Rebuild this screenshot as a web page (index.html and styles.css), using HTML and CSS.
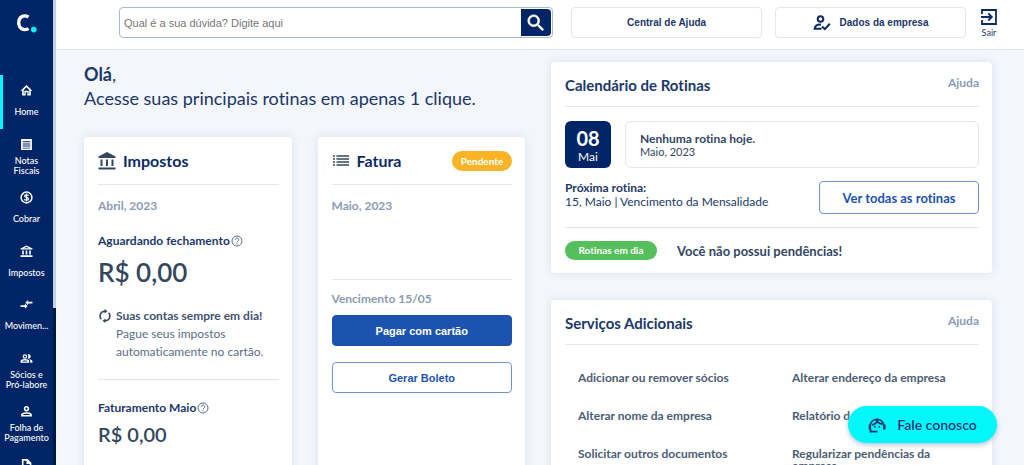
FILE: index.html
```
<!DOCTYPE html>
<html lang="pt-BR">
<head>
<meta charset="utf-8">
<meta name="viewport" content="width=device-width, initial-scale=1">
<title>Home</title>
<link rel="stylesheet" href="styles.css">
</head>
<body>
<div class="app">
  <aside class="sidebar">
    <a class="logo" href="#" aria-label="Início">
      <svg width="22" height="20" viewBox="0 0 22 20"><path d="M12.500 4C7.500 1.200 2.700 4.200 2.700 9.800S7.500 18.200 12.500 15.600" fill="none" stroke="#fff" stroke-width="3.300"/><circle cx="17.800" cy="16.600" r="2.800" fill="#00f5ff"/></svg>
    </a>
    <nav class="menu">
      <a class="item active" href="#"><svg class="ico" viewBox="0 0 24 24"><path fill-rule="evenodd" d="M12 2L1 12.500h3V21h6.500v-6h3v6H20v-8.500h3L12 2zm0 4.200l5 4.800v7.500H16v-6H8v6H7V11L12 6.200z"/></svg><span class="label">Home</span></a>
      <a class="item" href="#"><svg class="ico" viewBox="0 0 24 24"><path d="M2 2h20v20H2zM5 6v1.800h14V6zM5 10v1.800h14V10zM5 14v1.800h14V14zM5 18v1.500h14V18z" fill-rule="evenodd"/></svg><span class="label">Notas Fiscais</span></a>
      <a class="item" href="#"><svg class="ico" viewBox="0 0 24 24"><circle cx="12" cy="12" r="10" fill="none" stroke="#fff" stroke-width="2.800"/><path d="M16 8.500C15 6.500 8.500 6.300 8.500 9.300c0 3.400 7.200 1.800 7.200 5.300 0 3.200-6.700 3-7.700.5M12 4.500v15" fill="none" stroke="#fff" stroke-width="2.200"/></svg><span class="label">Cobrar</span></a>
      <a class="item" href="#"><svg class="ico" viewBox="0 0 24 24"><path d="M7 10H4v7.500h3V10zm6.500 0h-3v7.500h3V10zM23 19H1v3h22v-3zM20 10h-3v7.500h3V10zm-8-6.500L17 6H7l5-2.500M12 1L1 6.300V8.500h22V6.300L12 1z"/></svg><span class="label">Impostos</span></a>
      <a class="item" href="#"><svg class="ico" viewBox="0 0 24 24"><path d="M9 13.500H1v3h8V20l5-4.900-5-4.900zM15 13.300V10h8V7h-8V3.500l-5 4.900z"/></svg><span class="label">Movimen...</span></a>
      <a class="item" href="#"><svg class="ico" viewBox="0 0 24 24"><path fill-rule="evenodd" d="M9 4a4.200 4.200 0 1 1 0 8.400A4.200 4.200 0 0 1 9 4zm0 2.300a1.900 1.900 0 1 0 0 3.800 1.900 1.900 0 0 0 0-3.800zM1 20v-3c0-2.500 4-4 8-4s8 1.500 8 4v3zm2.500-2.300h11c-1-1.500-3-2.200-5.500-2.200s-4.500.7-5.500 2.200zM14 4.300a4.200 4.200 0 1 1 0 7.800c1.800-2.200 1.800-5.600 0-7.800zM17 13.300c3.500.4 6 1.700 6 3.700v3h-4v-3c0-1.500-.8-2.700-2-3.700z"/></svg><span class="label">Sócios e Pró-labore</span></a>
      <a class="item" href="#"><svg class="ico" viewBox="0 0 24 24"><path fill-rule="evenodd" d="M12 2a4.900 4.900 0 1 1 0 9.800A4.900 4.900 0 0 1 12 2zm0 2.800a2.100 2.100 0 1 0 0 4.200 2.100 2.100 0 0 0 0-4.200zM2 21v-3c0-2.800 5-4.500 10-4.500s10 1.700 10 4.500v3zm3.500-2.700h13c-1-1.300-4-2-6.500-2s-5.500.7-6.500 2z"/></svg><span class="label">Folha de Pagamento</span></a>
      <a class="item" href="#" aria-label="Documentos"><svg class="ico" viewBox="0 0 24 24"><path d="M3.500 0H14l7 7v16H3.500zM6.500 3v17h11.500V9H12V3z" fill-rule="evenodd"/></svg></a>
    </nav>
  </aside>
  <div class="rail"><div class="thumb"></div></div>
  <div class="page">
    <header class="topbar">
      <form class="search">
        <input class="search-input" type="text" aria-label="Buscar" placeholder="Qual é a sua dúvida? Digite aqui">
        <button class="search-btn" type="button" aria-label="Pesquisar"><svg width="22" height="22" viewBox="0 0 24 24"><path fill="#fff" stroke="#fff" stroke-width=".6" d="M15.500 14h-.79l-.28-.27A6.470 6.470 0 0 0 16 9.500 6.500 6.500 0 1 0 9.500 16c1.610 0 3.090-.59 4.230-1.570l.27.28v.79l5 4.990L20.490 19l-4.990-5zm-6 0C7.010 14 5 11.990 5 9.500S7.010 5 9.500 5 14 7.010 14 9.500 11.990 14 9.500 14z"/></svg></button>
      </form>
      <button class="top-btn" type="button">Central de Ajuda</button>
      <button class="top-btn" type="button"><svg width="18" height="16" viewBox="0 0 18 16" fill="none" stroke="#0b2a66" stroke-width="2"><circle cx="7.500" cy="4" r="2.800"/><path d="M8 9.500C4.500 9.300 2 11 1.600 13.800H8.500M9 11.500l2.800 2.600 5-5.300"/></svg>Dados da empresa</button>
      <a class="exit" href="#"><svg width="16" height="16" viewBox="0 0 16 16" fill="none" stroke="#0b2a66" stroke-width="1.800"><path d="M1 5V1h14v14H1v-4M0 8h10.500M7.300 4.500L10.800 8l-3.500 3.500"/></svg>Sair</a>
    </header>
    <main class="content">
      <section class="column">
        <h1 class="greeting"><strong>Olá</strong>,<br>Acesse suas principais rotinas em apenas 1 clique.</h1>
        <div class="pair">
          <article class="card tall">
            <div class="card-head">
              <svg width="18" height="18" viewBox="0 0 18 18" fill="#33475f"><path d="M9 0l8.500 4.500V6H.5V4.500zM2.500 7.500h2V14h-2zM8 7.500h2V14H8zM13.500 7.500h2V14h-2zM.5 15.500h17v2H.5z"/></svg>
              <h2 class="title">Impostos</h2>
            </div>
            <p class="month">Abril, 2023</p>
            <p class="caption">Aguardando fechamento<svg class="help" viewBox="0 0 12 12"><circle cx="6" cy="6" r="5"/><path d="M4.300 4.800a1.700 1.700 0 1 1 2.600 1.400c-.6.400-.9.600-.9 1.200M6 8.300v1"/></svg></p>
            <p class="amount big">R$ 0,00</p>
            <div class="tip">
              <svg width="14" height="14" viewBox="0 0 14 14" fill="none" stroke="#33475f" stroke-width="1.500"><path d="M3.300 10.200A4.800 4.800 0 0 1 7 2.200M10.700 3.800A4.800 4.800 0 0 1 7 11.800"/><path fill="#33475f" stroke="none" d="M6.500 0l3 2.300-3 2.300zM7.500 9.400v4.600l-3-2.300z"/></svg>
              <p><strong>Suas contas sempre em dia!</strong><br>Pague seus impostos automaticamente no cartão.</p>
            </div>
            <p class="caption">Faturamento Maio<svg class="help" viewBox="0 0 12 12"><circle cx="6" cy="6" r="5"/><path d="M4.300 4.800a1.700 1.700 0 1 1 2.600 1.400c-.6.400-.9.600-.9 1.200M6 8.300v1"/></svg></p>
            <p class="amount">R$ 0,00</p>
          </article>
          <article class="card tall">
            <div class="card-head">
              <svg width="18" height="18" viewBox="0 0 18 18" fill="none" stroke="#33475f" stroke-width="1.500"><path d="M1 4h2M1 7h2M1 10h2M1 13h2M4.500 4H17M4.500 7H17M4.500 10H17M4.500 13H17"/></svg>
              <h2 class="title">Fatura</h2>
              <span class="badge pending">Pendente</span>
            </div>
            <p class="month invoice">Maio, 2023</p>
            <p class="month due">Vencimento 15/05</p>
            <button class="btn primary" type="button">Pagar com cartão</button>
            <button class="btn" type="button">Gerar Boleto</button>
          </article>
        </div>
      </section>
      <section class="column side">
        <article class="card">
          <div class="side-head"><h2 class="side-title">Calendário de Rotinas</h2><a class="hint" href="#">Ajuda</a></div>
          <div class="today">
            <div class="date"><span class="day">08</span><span>Mai</span></div>
            <div class="event"><strong>Nenhuma rotina hoje.</strong><span>Maio, 2023</span></div>
          </div>
          <div class="next">
            <p class="next-text"><strong>Próxima rotina:</strong><br>15, Maio | Vencimento da Mensalidade</p>
            <button class="btn routines" type="button">Ver todas as rotinas</button>
          </div>
          <div class="status"><span class="badge ok">Rotinas em dia</span><span class="status-text">Você não possui pendências!</span></div>
        </article>
        <article class="card services">
          <div class="side-head"><h2 class="side-title">Serviços Adicionais</h2><a class="hint" href="#">Ajuda</a></div>
          <div class="links">
            <a class="link" href="#">Adicionar ou remover sócios</a>
            <a class="link" href="#">Alterar endereço da empresa</a>
            <a class="link" href="#">Alterar nome da empresa</a>
            <a class="link" href="#">Relatório de</a>
            <a class="link" href="#">Solicitar outros documentos</a>
            <a class="link" href="#">Regularizar pendências da empresa</a>
          </div>
        </article>
      </section>
    </main>
  </div>
  <button class="chat" type="button"><svg width="18" height="18" viewBox="0 0 18 18" fill="none" stroke="#0a2f6b" stroke-width="1.700"><path d="M2.300 9A6.800 6.800 0 0 1 15.700 9M4 8.800c3-.4 4.500-1.800 5-3.600 1.400 1.900 3 2.700 5.400 2.900"/><path stroke-width="2.400" d="M1.900 8.500v5M16.300 8.500v5"/><path d="M2.500 13v2.700H9.500"/><path fill="#0a2f6b" stroke="none" d="M6 10h1.600v1.600H6zM10.500 10h1.600v1.600h-1.600z"/></svg>Fale conosco</button>
</div>
</body>
</html>
```
FILE: styles.css
```
* { box-sizing: border-box; }
body { margin: 0; font-family: Lato, sans-serif; font-variant-ligatures: none; color: #33475f; background: #f3f6fb; }
h1, h2, p { margin: 0; }
a { color: inherit; text-decoration: none; }
button { font-family: inherit; font-variant-ligatures: none; cursor: pointer; }
svg { display: block; flex: none; }

.app { display: flex; height: 100vh; overflow: hidden; }

/* Sidebar */
.sidebar { flex: 0 0 53px; background: #002566; color: #fff; overflow: hidden; }
.logo { display: flex; justify-content: center; height: 75px; padding-top: 13px; }
.menu { display: grid; grid-template-rows: repeat(8, 1fr); height: 428px; }
.item { display: flex; flex-direction: column; align-items: center; gap: 4px; padding-top: 9px; border-left: 3px solid transparent; border-right: 3px solid transparent; }
.item.active { border-left-color: #00f5ff; }
.ico { width: 13px; height: 13px; fill: #fff; }
.label { display: flex; align-items: center; height: 22px; font-size: 9px; line-height: 10px; font-weight: 500; text-align: center; }
.rail { flex: 0 0 3px; background: #c3d0e6; padding-top: 308px; }
.thumb { height: 100%; background: #001744; }

/* Header */
.page { flex: 1; min-width: 0; display: flex; flex-direction: column; }
.topbar { flex: none; display: flex; align-items: flex-start; height: 50px; padding: 7px 25px 0 63px; background: #fff; border-bottom: 1px solid #e4e8ee; }
.search { flex: 435 1 0; display: flex; height: 31px; padding: 1px; margin-right: 18px; border: 1px solid #a9b8cf; border-radius: 4px; background: #fff; }
.search-input { flex: 1; min-width: 0; border: 0; outline: 0; padding: 0 3px; font: 11px "Liberation Sans", Arial, sans-serif; background: transparent; }
.search-input::placeholder { color: #757575; }
.search-btn { display: flex; align-items: center; justify-content: center; width: 30px; padding: 0; border: 0; border-radius: 0 4px 4px 0; background: #002566; }
.top-btn { flex: 191 1 0; display: flex; align-items: center; justify-content: center; gap: 9px; height: 31px; margin-right: 13px; padding: 0; border: 1px solid #dfe7f1; border-radius: 4px; background: #fff; color: #1c3768; font: 700 10px "Liberation Sans", Arial, sans-serif; }
.exit { display: flex; flex-direction: column; align-items: center; gap: 2px; width: 20px; padding-top: 2px; font-size: 9px; line-height: 12px; color: #1c3768; }

/* Content */
.content { flex: 1; min-height: 0; display: grid; grid-template-columns: 1fr 1fr; gap: 26px; padding: 12px 32px 0 28px; overflow: hidden; }
.column { min-width: 0; }
.greeting { font-size: 18px; line-height: 24px; font-weight: 400; color: #1c3768; white-space: nowrap; margin-bottom: 27px; }
.greeting strong { font-weight: 700; }
.pair { display: grid; grid-template-columns: 1fr 1fr; gap: 26px; }
.card { padding: 0 13px 0 14px; background: #fff; border-radius: 4px; box-shadow: 0 0 9px #d8e2f0; }
.tall { height: 440px; }
.card-head { display: flex; align-items: center; gap: 7px; height: 48px; border-bottom: 1px solid #dfe7f1; }
.title { font-size: 16px; line-height: 20px; font-weight: 700; color: #0b2a66; }
.badge { border-radius: 10px; color: #fff; font-weight: 700; font-size: 10px; line-height: 20px; text-align: center; }
.pending { margin-left: auto; width: 60px; background: #f8b425; }
.month { margin-top: 12px; font-size: 12px; line-height: 18px; font-weight: 700; color: #8b9bb3; }
.caption { display: flex; align-items: center; gap: 1px; margin-top: 17px; font-size: 12px; line-height: 18px; font-weight: 700; color: #1c3768; }
.help { width: 12px; height: 12px; fill: none; stroke: #5b6c85; stroke-width: 1; }
.amount { font-size: 20px; line-height: 34px; font-weight: 600; }
.big { font-size: 26px; line-height: 44px; }
.tip { display: flex; gap: 4px; margin-top: 13px; padding-bottom: 18px; border-bottom: 1px solid #dfe7f1; font-size: 12px; line-height: 18px; }
.tip p { color: #5b6c85; }
.tip strong { color: #3f536f; font-weight: 700; }
.tip svg { margin-top: 2px; }
.tip + .caption { margin-top: 19px; }
.invoice { height: 83px; border-bottom: 1px solid #dfe7f1; }
.due { margin-top: 10px; }
.btn { display: block; width: 100%; height: 31px; padding: 0; border: 1px solid #7394d0; border-radius: 4px; background: #fff; color: #1b53ae; font: 700 11px "Liberation Sans", Arial, sans-serif; }
.btn.primary { margin: 7px 0 16px; border-color: #1b53ae; background: #1b53ae; color: #fff; }

/* Right column */
.side-head { display: flex; justify-content: space-between; height: 45px; border-bottom: 1px solid #dfe7f1; }
.side-title { padding-top: 13px; font-size: 15px; line-height: 20px; font-weight: 700; color: #1c3768; }
.hint { padding-top: 12px; font-size: 12px; line-height: 18px; font-weight: 700; color: #8b9bb3; }
.today { display: flex; gap: 14px; margin-top: 14px; }
.date { display: flex; flex-direction: column; align-items: center; flex: 0 0 46px; height: 47px; padding-top: 6px; border-radius: 6px; background: #002566; color: #fff; font-size: 12px; line-height: 16px; }
.day { font-size: 20px; line-height: 22px; font-weight: 700; }
.event { flex: 1; display: flex; flex-direction: column; justify-content: center; padding: 0 14px; border: 1px solid #dfe7f1; border-radius: 6px; font-size: 11px; line-height: 12px; }
.event strong { font-size: 12px; line-height: 14px; font-weight: 700; }
.next { display: flex; justify-content: space-between; margin-top: 13px; padding-bottom: 13px; border-bottom: 1px solid #dfe7f1; }
.next-text { font-size: 12px; line-height: 14px; color: #1c3768; }
.btn.routines { width: 160px; height: 33px; font: 700 13px Lato, sans-serif; font-variant-ligatures: none; }
.status { display: flex; align-items: center; gap: 20px; height: 45px; }
.ok { width: 92px; line-height: 19px; background: #55c05b; }
.status-text { font-size: 13px; font-weight: 700; }
.services { margin-top: 27px; height: 260px; }
.links { display: grid; grid-template-columns: 1fr 1fr; row-gap: 16px; padding: 23px 13px 0; column-gap: 40px; }
.link { min-height: 22px; padding-top: 4px; font-size: 12px; line-height: 12px; font-weight: 700; color: #4c5c74; }

/* Floating contact button */
.chat { position: fixed; right: 27px; bottom: 22px; display: flex; align-items: center; justify-content: center; gap: 11px; width: 149px; height: 37px; padding: 0; border: 0; border-radius: 19px; background: #00f8fb; color: #0a2f6b; font-size: 14px; font-weight: 600; box-shadow: 0 2px 5px #b4c4d6; }
```
